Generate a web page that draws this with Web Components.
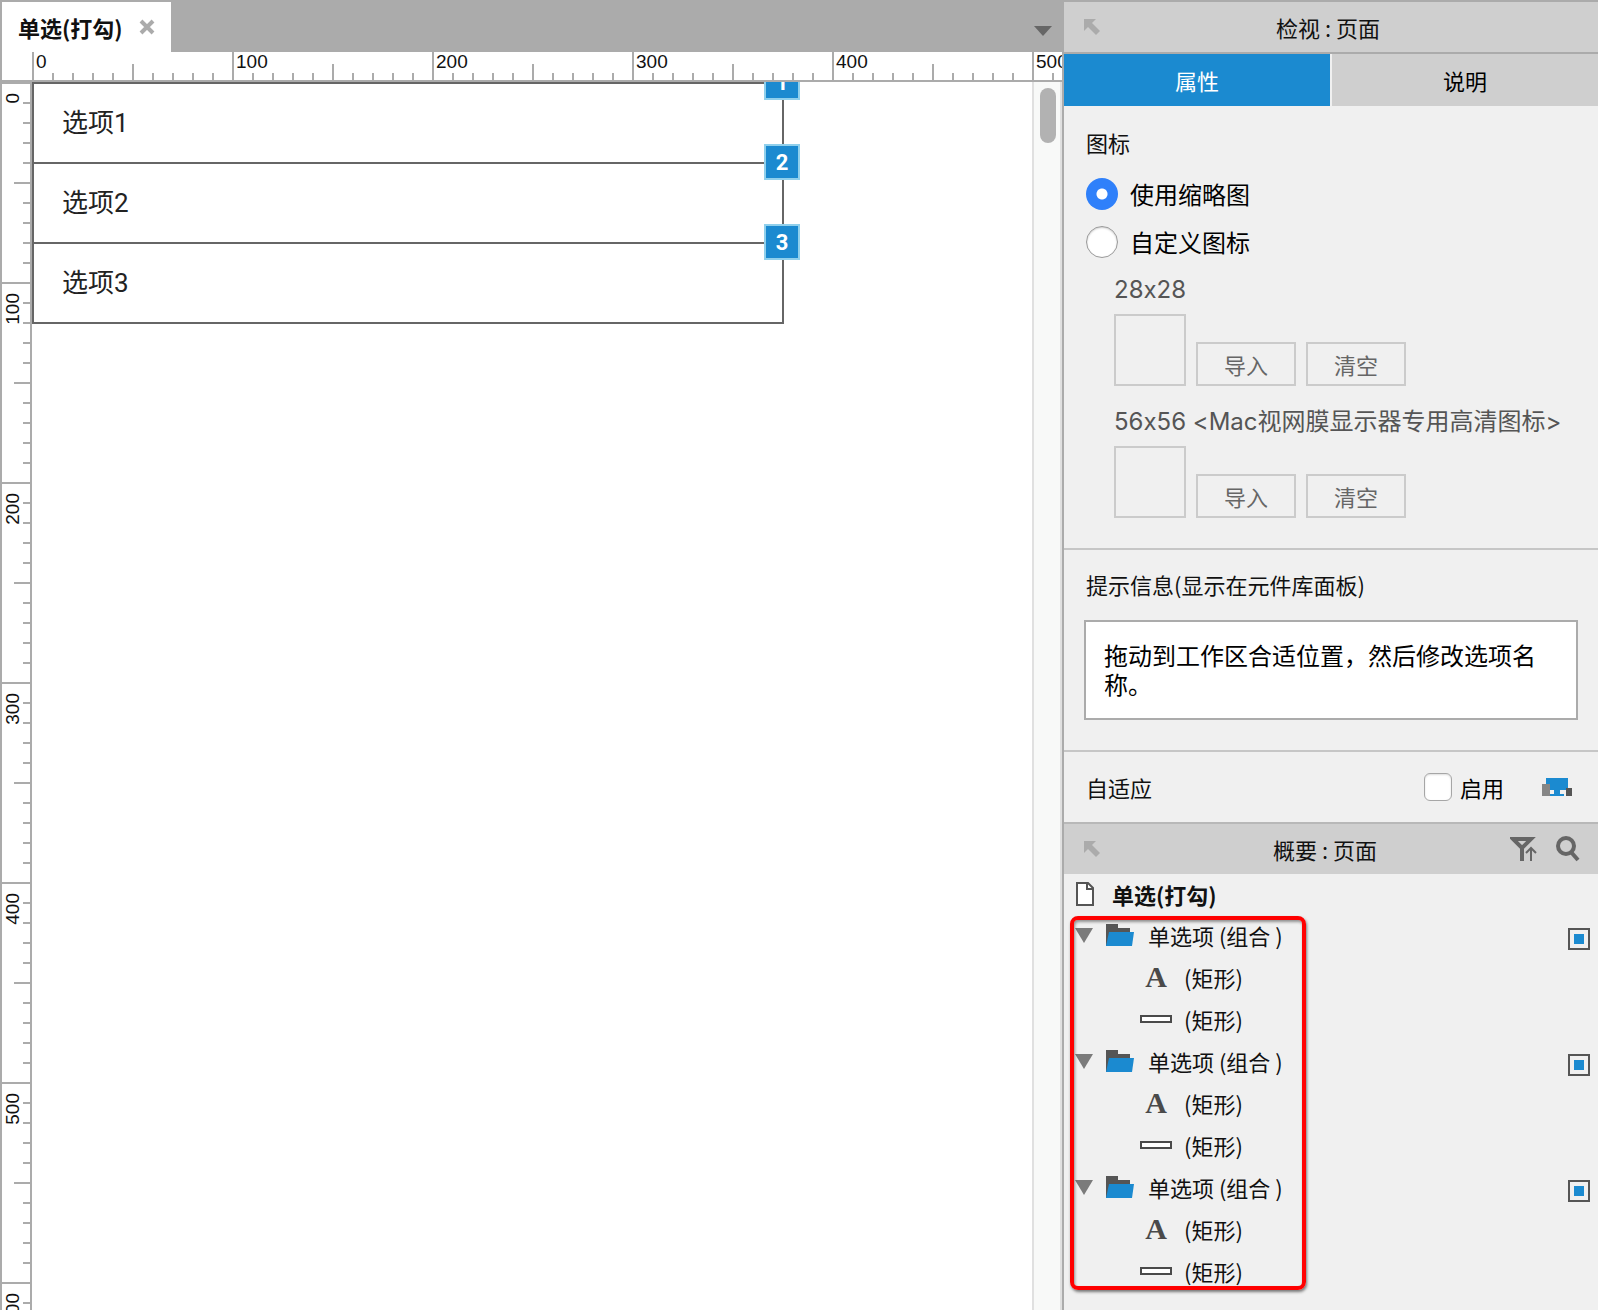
<!DOCTYPE html>
<html lang="zh-CN">
<head>
<meta charset="utf-8">
<title>单选(打勾)</title>
<style>
    html, body {
        margin: 0;
        height: 100%;
    }
    body {
        --line: #ababab;
        --bar: #cfcfcf;
        --blue: #1b8ad0;
        font-family: "Noto Sans CJK SC", sans-serif;
        font-size: 22px;
        line-height: 32px;
        color: #111;
    }
</style>
</head>
<body>
<app-window>
    <doc-tabs slot="tabs" title="单选(打勾)"></doc-tabs>
    <ruler-bar slot="ruler-x" axis="x"></ruler-bar>
    <ruler-bar slot="ruler-y" axis="y"></ruler-bar>
    <option-item no="1">选项1</option-item>
    <option-item no="2">选项2</option-item>
    <option-item no="3">选项3</option-item>

    <panel-header slot="side">检视 : 页面</panel-header>
    <panel-tabs slot="side"></panel-tabs>
    <panel-section slot="side">
        <icon-source></icon-source>
        <icon-import size="28x28"></icon-import>
        <icon-import size="56x56 <Mac视网膜显示器专用高清图标>"></icon-import>
    </panel-section>
    <panel-section slot="side">
        <tip-field label="提示信息(显示在元件库面板)">拖动到工作区合适位置，然后修改选项名称。</tip-field>
    </panel-section>
    <adaptive-row slot="side"></adaptive-row>
    <panel-header slot="side" tools>概要 : 页面</panel-header>
    <outline-tree slot="side" title="单选(打勾)">
        <outline-group>单选项 (组合 )</outline-group>
        <outline-group>单选项 (组合 )</outline-group>
        <outline-group>单选项 (组合 )</outline-group>
    </outline-tree>
</app-window>

<script>
/* Small base class: every component only has to return its template */
class BaseElement extends HTMLElement {
    constructor() {
        super();
        this.attachShadow({ mode: 'open' });
    }

    connectedCallback() {
        this.shadowRoot.innerHTML = `<style>*, *::after { box-sizing: border-box; }</style>${this.template()}`;
    }

    attr(name) {
        return (this.getAttribute(name) || '').replace(/</g, '&lt;').replace(/>/g, '&gt;');
    }
}

class AppWindow extends BaseElement {
    template() {
        return `
            <style>
                :host {
                    display: grid;
                    box-sizing: border-box;
                    grid-template-columns: minmax(0, 1fr) 534px;
                    height: 100vh;
                    overflow: hidden;
                    border-top: 2px solid var(--line);
                }
                .editor {
                    display: grid;
                    grid-template: 50px 30px minmax(0, 1fr) / 30px minmax(0, 1fr);
                    border: solid var(--line);
                    border-width: 0 2px;
                    background: #fff;
                    min-height: 0;
                }
                .tabs { grid-column: 1 / -1; }
                .ruler-x { grid-column: 2; min-width: 0; }
                .corner { border-bottom: 2px solid var(--line); }
                .ruler-y { min-height: 0; }
                .work {
                    display: flex;
                    min-height: 0;
                }
                .canvas {
                    flex: 1;
                    overflow: hidden;
                }
                .list {
                    width: 752px;
                    border-bottom: 2px solid #666;
                }
                .track {
                    width: 30px;
                    padding: 6px;
                    background: #f8f9f8;
                    border: solid #e0e0e0;
                    border-width: 0 2px;
                }
                .thumb {
                    width: 16px;
                    height: 55px;
                    border-radius: 8px;
                    background: #b2b2b2;
                }
                aside {
                    background: #f0f0f0;
                    min-height: 0;
                    overflow: hidden;
                }
            </style>
            <main class="editor">
                <div class="tabs"><slot name="tabs"></slot></div>
                <div class="corner"></div>
                <div class="ruler-x"><slot name="ruler-x"></slot></div>
                <div class="ruler-y"><slot name="ruler-y"></slot></div>
                <div class="work">
                    <div class="canvas"><div class="list"><slot></slot></div></div>
                    <div class="track"><div class="thumb"></div></div>
                </div>
            </main>
            <aside><slot name="side"></slot></aside>
        `;
    }
}

class DocTabs extends BaseElement {
    template() {
        return `
            <style>
                :host {
                    display: flex;
                    justify-content: space-between;
                    align-items: center;
                    height: 50px;
                    padding-right: 10px;
                    box-sizing: border-box;
                    background: var(--line);
                }
                .tab {
                    display: flex;
                    align-items: center;
                    gap: 16px;
                    height: 50px;
                    padding: 0 16px;
                    background: #fff;
                    font-weight: 700;
                }
                button {
                    display: flex;
                    padding: 0;
                    border: 0;
                    background: none;
                }
                .all { padding-top: 8px; }
            </style>
            <div class="tab">
                <span>${this.attr('title')}</span>
                <button aria-label="关闭"><svg width="16" height="16"><path d="M2 2L14 14M14 2L2 14" stroke="#ababab" stroke-width="4"/></svg></button>
            </div>
            <button class="all" aria-label="全部页面"><svg width="18" height="10"><path d="M0 0H18L9 10Z" fill="#666"/></svg></button>
        `;
    }
}

/* Ruler made of 200px segments, one per 100 units, a tick each 10 units */
class RulerBar extends BaseElement {
    connectedCallback() {
        super.connectedCallback();
        new ResizeObserver(() => this.fill()).observe(this);
    }

    fill() {
        const size = this.getAttribute('axis') === 'x' ? this.clientWidth : this.clientHeight;
        const count = Math.ceil(size / 200);
        let html = '';
        for (let i = 0; i < count; i++) {
            html += `<div class="seg"><span>${i * 100}</span></div>`;
        }
        this.shadowRoot.querySelector('.segs').innerHTML = html;
    }

    template() {
        const x = this.getAttribute('axis') === 'x';
        const dir = x ? 'to right' : 'to bottom';
        const edge = x ? 'bottom' : 'right';
        const box = (a, b) => x ? `${a} ${b}` : `${b} ${a}`;
        const tick = `linear-gradient(${dir}, var(--line) 2px, transparent 2px)`;
        return `
            <style>
                :host {
                    display: block;
                    box-sizing: border-box;
                    height: ${x ? '30px' : '100%'};
                    border-${edge}: 2px solid var(--line);
                    overflow: hidden;
                    font: 19px/20px "Liberation Sans", sans-serif;
                    color: #111;
                }
                .segs {
                    display: flex;
                    flex-direction: ${x ? 'row' : 'column'};
                    height: 100%;
                }
                .seg {
                    flex: none;
                    ${x ? 'width' : 'height'}: 200px;
                    padding: ${x ? '0 0 0 4px' : '11px 0 0 1px'};
                    background:
                        ${tick} 0 0 / ${box('200px', '100%')},
                        ${tick} ${edge} 0 ${x ? 'left' : 'top'} 100px / ${box('200px', '16px')} ${x ? 'repeat-x' : 'repeat-y'},
                        ${tick} ${edge} 0 ${x ? 'left' : 'top'} 0 / ${box('20px', '7px')} ${x ? 'repeat-x' : 'repeat-y'};
                }
                span {
                    display: block;
                    ${x ? '' : 'writing-mode: vertical-rl; rotate: 180deg; width: 20px;'}
                }
            </style>
            <div class="segs"></div>
        `;
    }
}

class OptionItem extends BaseElement {
    template() {
        return `
            <style>
                :host {
                    display: flex;
                    align-items: center;
                    box-sizing: border-box;
                    position: relative;
                    height: 80px;
                    padding-left: 28px;
                    border: solid #666;
                    border-width: 2px 2px 0;
                    font-family: Roboto, "Noto Sans CJK SC", sans-serif;
                    font-size: 26px;
                    color: #222;
                }
                .no {
                    position: absolute;
                    top: -20px;
                    right: -18px;
                    z-index: 1;
                    width: 36px;
                    height: 36px;
                    border: 2px solid #90d0ec;
                    background: var(--blue);
                    color: #fff;
                    font-size: 22px;
                    font-weight: 700;
                    line-height: 34px;
                    text-align: center;
                }
            </style>
            <slot></slot>
            <span class="no">${this.attr('no')}</span>
        `;
    }
}

class PanelHeader extends BaseElement {
    template() {
        const tools = this.hasAttribute('tools') ? `
            <div class="tools">
                <button aria-label="筛选"><svg width="28" height="26" fill="none" stroke="#666">
                    <path d="M3 3H21L12 12Z" stroke-width="4"/>
                    <path d="M12 12V25" stroke-width="4"/>
                    <path d="M21 25V12M16 17L21 12L26 17" stroke-width="2"/>
                </svg></button>
                <button aria-label="搜索"><svg width="24" height="26" fill="none" stroke="#666" stroke-width="4">
                    <circle cx="10" cy="10" r="8"/>
                    <path d="M15 16L22 24"/>
                </svg></button>
            </div>` : '';
        return `
            <style>
                :host {
                    display: grid;
                    grid-template-columns: 88px 1fr 94px;
                    align-items: center;
                    box-sizing: border-box;
                    height: 52px;
                    background: var(--bar);
                    border-bottom: 2px solid var(--line);
                    text-align: center;
                }
                :host([tools]) {
                    grid-template-columns: 88px 1fr 100px;
                    border-top: 2px solid #b8b8b8;
                    border-bottom: 0;
                }
                button {
                    display: flex;
                    padding: 0;
                    border: 0;
                    background: none;
                }
                .pop { margin-left: 20px; }
                .tools {
                    display: flex;
                    gap: 18px;
                    padding-left: 12px;
                }
            </style>
            <button class="pop" aria-label="弹出"><svg width="16" height="16"><path d="M0 0H12L8 4L16 12L12 16L4 8L0 12Z" fill="#ababab"/></svg></button>
            <span><slot></slot></span>
            ${tools}
        `;
    }
}

class PanelTabs extends BaseElement {
    template() {
        return `
            <style>
                :host {
                    display: flex;
                    gap: 2px;
                    height: 52px;
                }
                button {
                    flex: 1;
                    padding: 0;
                    border: 0;
                    background: var(--bar);
                    font: inherit;
                    color: #000;
                }
                .on {
                    background: var(--blue);
                    color: #fff;
                }
            </style>
            <button class="on">属性</button>
            <button>说明</button>
        `;
    }
}

class PanelSection extends BaseElement {
    template() {
        return `
            <style>
                :host {
                    display: block;
                    padding: 20px 20px 30px;
                    border-bottom: 2px solid #c6c6c6;
                }
            </style>
            <slot></slot>
        `;
    }
}

class IconSource extends BaseElement {
    template() {
        return `
            <style>
                :host {
                    display: block;
                    margin-bottom: 8px;
                }
                fieldset {
                    margin: 0;
                    padding: 0 2px;
                    border: 0;
                }
                legend {
                    padding: 0;
                    margin-bottom: 12px;
                }
                label {
                    display: flex;
                    align-items: center;
                    gap: 12px;
                    height: 48px;
                    font-size: 24px;
                    color: #000;
                }
                input {
                    appearance: none;
                    width: 32px;
                    height: 32px;
                    margin: 0;
                    border: 1px solid #9a9a9a;
                    border-radius: 50%;
                    background: #fff;
                    box-shadow: inset 0 1px 2px #ccc;
                }
                input:checked {
                    border: 0;
                    box-shadow: none;
                    background: radial-gradient(circle, #fff 5px, #2f80fa 6px);
                }
            </style>
            <fieldset>
                <legend>图标</legend>
                <label><input type="radio" name="icon" checked>使用缩略图</label>
                <label><input type="radio" name="icon">自定义图标</label>
            </fieldset>
        `;
    }
}

class IconImport extends BaseElement {
    template() {
        return `
            <style>
                :host {
                    display: block;
                    padding: 0 0 0 30px;
                }
                :host(:not(:last-child)) { margin-bottom: 20px; }
                p {
                    margin: 0 0 8px;
                    font-family: Inter, "Noto Sans CJK SC", sans-serif;
                    font-feature-settings: "calt" 0;
                    font-size: 24px;
                    color: #555;
                    white-space: nowrap;
                }
                .row {
                    display: flex;
                    align-items: flex-end;
                    gap: 10px;
                }
                .preview {
                    width: 72px;
                    height: 72px;
                    border: 2px solid #cbcbcb;
                }
                button {
                    width: 100px;
                    height: 44px;
                    padding: 0;
                    border: 2px solid #cbcbcb;
                    background: none;
                    font: inherit;
                    color: #666;
                }
            </style>
            <p>${this.attr('size')}</p>
            <div class="row">
                <div class="preview"></div>
                <button>导入</button>
                <button>清空</button>
            </div>
        `;
    }
}

class TipField extends BaseElement {
    template() {
        return `
            <style>
                :host { display: block; }
                label {
                    display: block;
                    margin: 0 2px 22px;
                    line-height: 28px;
                }
                textarea {
                    display: block;
                    width: 100%;
                    height: 100px;
                    padding: 18px;
                    border: 2px solid var(--line);
                    background: #fff;
                    font: inherit;
                    font-size: 24px;
                    line-height: 29px;
                    color: #000;
                    resize: none;
                    overflow: hidden;
                }
            </style>
            <label for="tip">${this.attr('label')}</label>
            <textarea id="tip">${this.textContent}</textarea>
        `;
    }
}

class AdaptiveRow extends BaseElement {
    template() {
        return `
            <style>
                :host {
                    display: flex;
                    align-items: center;
                    height: 70px;
                    padding: 0 26px 0 22px;
                }
                .name { flex: 1; }
                label {
                    display: flex;
                    align-items: center;
                    gap: 8px;
                    margin-right: 38px;
                    color: #000;
                }
                input {
                    appearance: none;
                    width: 28px;
                    height: 28px;
                    margin: 0;
                    border: 1px solid #a6a6a6;
                    border-radius: 6px;
                    background: #fff;
                    box-shadow: inset 0 1px 2px #ddd;
                }
            </style>
            <span class="name">自适应</span>
            <label><input type="checkbox">启用</label>
            <svg width="30" height="18">
                <path d="M4 0H26V18H4Z" fill="#1b8ad0"/>
                <path d="M0 6H8V18H0Z" fill="#868686"/>
                <path d="M8 12H12V16H8ZM18 12H24V16H18ZM22 16H24V18H22Z" fill="#f0f0f0"/>
                <path d="M24 10H30V18H24Z" fill="#555"/>
            </svg>
        `;
    }
}

class OutlineTree extends BaseElement {
    template() {
        return `
            <style>
                :host { display: block; }
                .page {
                    display: flex;
                    align-items: center;
                    gap: 18px;
                    height: 40px;
                    padding-left: 12px;
                    font-weight: 700;
                }
                .groups { position: relative; }
                /* red marker drawn over the groups */
                .groups::after {
                    content: '';
                    position: absolute;
                    inset: 2px auto 2px 6px;
                    width: 236px;
                    border: 4px solid #f00;
                    border-radius: 8px;
                    box-shadow: 1px 2px 3px rgba(0, 0, 0, 0.5), inset 1px 2px 3px rgba(0, 0, 0, 0.4);
                    pointer-events: none;
                }
            </style>
            <div class="page">
                <svg width="18" height="24" fill="#fff" stroke="#555" stroke-width="2">
                    <path d="M1 1H12L17 6V23H1Z"/>
                    <path d="M11 1V7H17" fill="none"/>
                </svg>
                <span>${this.attr('title')}</span>
            </div>
            <div class="groups"><slot></slot></div>
        `;
    }
}

class OutlineGroup extends BaseElement {
    template() {
        return `
            <style>
                :host { display: block; }
                .row {
                    display: flex;
                    align-items: center;
                    height: 42px;
                    padding: 0 8px 0 11px;
                }
                .folder { margin: 0 14px 0 13px; }
                .name { flex: 1; }
                .mark {
                    align-self: flex-end;
                    width: 22px;
                    height: 22px;
                    margin-bottom: 6px;
                    border: 2px solid #555;
                    background: linear-gradient(var(--blue), var(--blue)) center / 10px 10px no-repeat;
                }
                .child {
                    gap: 12px;
                    padding-left: 76px;
                }
                .glyph {
                    display: flex;
                    justify-content: center;
                    width: 32px;
                    font: 700 30px/32px "Liberation Serif", serif;
                    color: #4a4a4a;
                }
                .bar {
                    width: 32px;
                    height: 8px;
                    border: 2px solid #4a4a4a;
                    background: #fff;
                }
            </style>
            <div class="row">
                <svg width="18" height="15"><path d="M0 0H18L9 15Z" fill="#7b7b7b"/></svg>
                <svg class="folder" width="28" height="22">
                    <path d="M0 0H12V4H24V22H0Z" fill="#555"/>
                    <path d="M3 8H28L26 22H0Z" fill="#1b8ad0"/>
                </svg>
                <span class="name"><slot></slot></span>
                <span class="mark"></span>
            </div>
            <div class="row child"><span class="glyph">A</span><span>(矩形)</span></div>
            <div class="row child"><span class="glyph"><span class="bar"></span></span><span>(矩形)</span></div>
        `;
    }
}

customElements.define('app-window', AppWindow);
customElements.define('doc-tabs', DocTabs);
customElements.define('ruler-bar', RulerBar);
customElements.define('option-item', OptionItem);
customElements.define('panel-header', PanelHeader);
customElements.define('panel-tabs', PanelTabs);
customElements.define('panel-section', PanelSection);
customElements.define('icon-source', IconSource);
customElements.define('icon-import', IconImport);
customElements.define('tip-field', TipField);
customElements.define('adaptive-row', AdaptiveRow);
customElements.define('outline-tree', OutlineTree);
customElements.define('outline-group', OutlineGroup);
</script>
</body>
</html>
